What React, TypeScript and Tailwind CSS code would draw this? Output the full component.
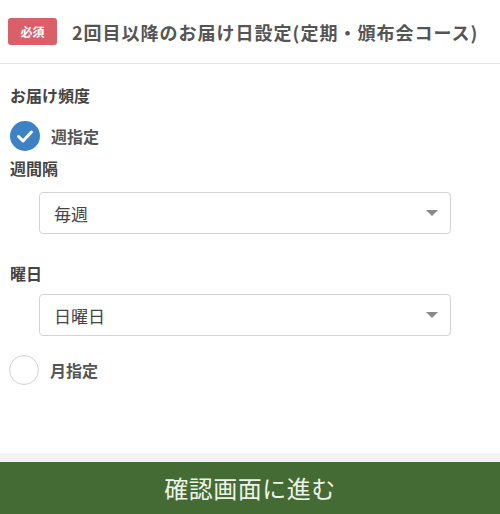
import React from "react";

const font = { fontFamily: '"Noto Sans CJK JP", "Noto Sans", sans-serif' };

function Caret() {
  return (
    <svg width="12" height="7" viewBox="0 0 12 7" className="shrink-0">
      <path d="M0 0 L12 0 L6 6 Z" fill="#8a8a8a" />
    </svg>
  );
}

function Select({ value }: { value: string }) {
  return (
    <div className="ml-[39px] mr-[49px] h-[42px] border border-[#d4d4d4] rounded-[4px] flex items-center justify-between pl-[14px] pr-[12px] bg-white">
      <span className="text-[17px] text-[#444] leading-none">{value}</span>
      <Caret />
    </div>
  );
}

export default function App() {
  return (
    <div className="w-[500px] h-[514px] bg-white flex flex-col overflow-hidden" style={font}>
      <div className="h-[64px] border-b border-[#e6e6e6] flex items-center pl-[8px] gap-[15px] shrink-0">
        <span className="bg-[#d95f69] text-white text-[12px] font-bold rounded-[3px] w-[49px] h-[27px] flex items-center justify-center leading-none">必須</span>
        <span className="text-[18px] font-bold text-[#555] leading-none tracking-[1px]">2回目以降のお届け日設定(定期・頒布会コース)</span>
      </div>
      <div className="flex-1 flex flex-col pl-[10px]">
        <div className="mt-[23px] text-[16px] font-bold text-[#444] leading-none h-[18px]">お届け頻度</div>
        <div className="mt-[16px] flex items-center gap-[11px]">
          <svg width="30" height="30" viewBox="0 0 30 30">
            <circle cx="15" cy="15" r="15" fill="#3d82c4" />
            <path d="M8.5 15.5 L13 20 L21.5 11" fill="none" stroke="white" strokeWidth="3" strokeLinecap="round" strokeLinejoin="round" />
          </svg>
          <span className="text-[16px] font-bold text-[#555] leading-none">週指定</span>
        </div>
        <div className="mt-[9px] text-[16px] font-bold text-[#444] leading-none h-[18px]">週間隔</div>
        <div className="mt-[14px] -ml-[10px]">
          <Select value="毎週" />
        </div>
        <div className="mt-[31px] text-[16px] font-bold text-[#444] leading-none h-[18px]">曜日</div>
        <div className="mt-[11px] -ml-[10px]">
          <Select value="日曜日" />
        </div>
        <div className="mt-[19px] flex items-center gap-[11px] -ml-[1px]">
          <div className="w-[30px] h-[30px] rounded-full border border-[#d0d0d0] bg-white" />
          <span className="text-[16px] font-bold text-[#555] leading-none">月指定</span>
        </div>
      </div>
      <div className="h-[9px] bg-[#f3f2f6] shrink-0" />
      <div className="h-[52px] bg-[#436b33] flex items-center justify-center shrink-0">
        <span className="text-[24px] text-[#eef3ea] leading-none tracking-[0.5px]">確認画面に進む</span>
      </div>
    </div>
  );
}
